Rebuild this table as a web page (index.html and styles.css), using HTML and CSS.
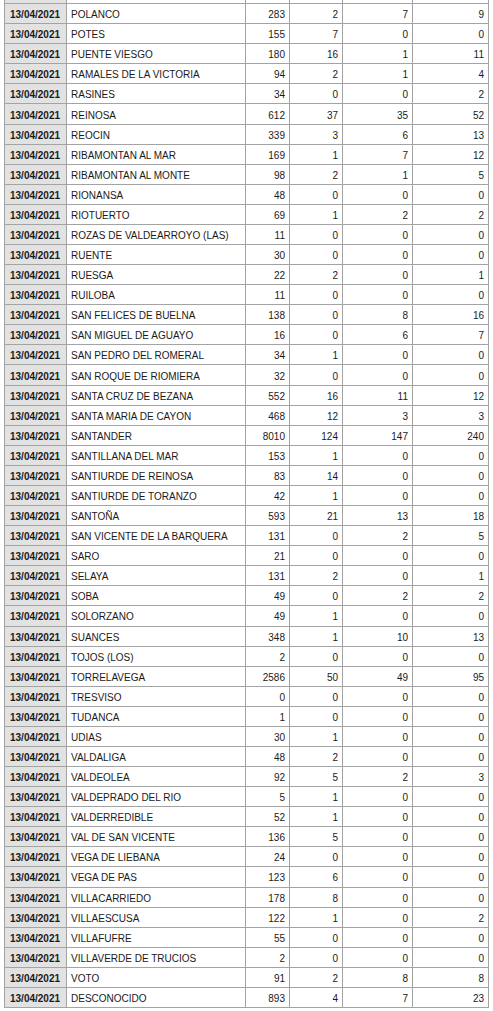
FILE: index.html
```html
<!DOCTYPE html>
<html>
<head>
<meta charset="utf-8">
<link rel="stylesheet" href="styles.css">
</head>
<body>
<div class="wrap">
<table class="data">
<colgroup>
<col class="c-date"><col class="c-name"><col class="c-n1"><col class="c-n2"><col class="c-n3"><col class="c-n4">
</colgroup>
<tbody>
<tr class="partial"><td class="d"></td><td class="m"></td><td></td><td></td><td></td><td></td></tr>
<tr><td class="d">13/04/2021</td><td class="m">POLANCO</td><td>283</td><td>2</td><td>7</td><td>9</td></tr>
<tr><td class="d">13/04/2021</td><td class="m">POTES</td><td>155</td><td>7</td><td>0</td><td>0</td></tr>
<tr><td class="d">13/04/2021</td><td class="m">PUENTE VIESGO</td><td>180</td><td>16</td><td>1</td><td>11</td></tr>
<tr><td class="d">13/04/2021</td><td class="m">RAMALES DE LA VICTORIA</td><td>94</td><td>2</td><td>1</td><td>4</td></tr>
<tr><td class="d">13/04/2021</td><td class="m">RASINES</td><td>34</td><td>0</td><td>0</td><td>2</td></tr>
<tr><td class="d">13/04/2021</td><td class="m">REINOSA</td><td>612</td><td>37</td><td>35</td><td>52</td></tr>
<tr><td class="d">13/04/2021</td><td class="m">REOCIN</td><td>339</td><td>3</td><td>6</td><td>13</td></tr>
<tr><td class="d">13/04/2021</td><td class="m">RIBAMONTAN AL MAR</td><td>169</td><td>1</td><td>7</td><td>12</td></tr>
<tr><td class="d">13/04/2021</td><td class="m">RIBAMONTAN AL MONTE</td><td>98</td><td>2</td><td>1</td><td>5</td></tr>
<tr><td class="d">13/04/2021</td><td class="m">RIONANSA</td><td>48</td><td>0</td><td>0</td><td>0</td></tr>
<tr><td class="d">13/04/2021</td><td class="m">RIOTUERTO</td><td>69</td><td>1</td><td>2</td><td>2</td></tr>
<tr><td class="d">13/04/2021</td><td class="m">ROZAS DE VALDEARROYO (LAS)</td><td>11</td><td>0</td><td>0</td><td>0</td></tr>
<tr><td class="d">13/04/2021</td><td class="m">RUENTE</td><td>30</td><td>0</td><td>0</td><td>0</td></tr>
<tr><td class="d">13/04/2021</td><td class="m">RUESGA</td><td>22</td><td>2</td><td>0</td><td>1</td></tr>
<tr><td class="d">13/04/2021</td><td class="m">RUILOBA</td><td>11</td><td>0</td><td>0</td><td>0</td></tr>
<tr><td class="d">13/04/2021</td><td class="m">SAN FELICES DE BUELNA</td><td>138</td><td>0</td><td>8</td><td>16</td></tr>
<tr><td class="d">13/04/2021</td><td class="m">SAN MIGUEL DE AGUAYO</td><td>16</td><td>0</td><td>6</td><td>7</td></tr>
<tr><td class="d">13/04/2021</td><td class="m">SAN PEDRO DEL ROMERAL</td><td>34</td><td>1</td><td>0</td><td>0</td></tr>
<tr><td class="d">13/04/2021</td><td class="m">SAN ROQUE DE RIOMIERA</td><td>32</td><td>0</td><td>0</td><td>0</td></tr>
<tr><td class="d">13/04/2021</td><td class="m">SANTA CRUZ DE BEZANA</td><td>552</td><td>16</td><td>11</td><td>12</td></tr>
<tr><td class="d">13/04/2021</td><td class="m">SANTA MARIA DE CAYON</td><td>468</td><td>12</td><td>3</td><td>3</td></tr>
<tr><td class="d">13/04/2021</td><td class="m">SANTANDER</td><td>8010</td><td>124</td><td>147</td><td>240</td></tr>
<tr><td class="d">13/04/2021</td><td class="m">SANTILLANA DEL MAR</td><td>153</td><td>1</td><td>0</td><td>0</td></tr>
<tr><td class="d">13/04/2021</td><td class="m">SANTIURDE DE REINOSA</td><td>83</td><td>14</td><td>0</td><td>0</td></tr>
<tr><td class="d">13/04/2021</td><td class="m">SANTIURDE DE TORANZO</td><td>42</td><td>1</td><td>0</td><td>0</td></tr>
<tr><td class="d">13/04/2021</td><td class="m">SANTOÑA</td><td>593</td><td>21</td><td>13</td><td>18</td></tr>
<tr><td class="d">13/04/2021</td><td class="m">SAN VICENTE DE LA BARQUERA</td><td>131</td><td>0</td><td>2</td><td>5</td></tr>
<tr><td class="d">13/04/2021</td><td class="m">SARO</td><td>21</td><td>0</td><td>0</td><td>0</td></tr>
<tr><td class="d">13/04/2021</td><td class="m">SELAYA</td><td>131</td><td>2</td><td>0</td><td>1</td></tr>
<tr><td class="d">13/04/2021</td><td class="m">SOBA</td><td>49</td><td>0</td><td>2</td><td>2</td></tr>
<tr><td class="d">13/04/2021</td><td class="m">SOLORZANO</td><td>49</td><td>1</td><td>0</td><td>0</td></tr>
<tr><td class="d">13/04/2021</td><td class="m">SUANCES</td><td>348</td><td>1</td><td>10</td><td>13</td></tr>
<tr><td class="d">13/04/2021</td><td class="m">TOJOS (LOS)</td><td>2</td><td>0</td><td>0</td><td>0</td></tr>
<tr><td class="d">13/04/2021</td><td class="m">TORRELAVEGA</td><td>2586</td><td>50</td><td>49</td><td>95</td></tr>
<tr><td class="d">13/04/2021</td><td class="m">TRESVISO</td><td>0</td><td>0</td><td>0</td><td>0</td></tr>
<tr><td class="d">13/04/2021</td><td class="m">TUDANCA</td><td>1</td><td>0</td><td>0</td><td>0</td></tr>
<tr><td class="d">13/04/2021</td><td class="m">UDIAS</td><td>30</td><td>1</td><td>0</td><td>0</td></tr>
<tr><td class="d">13/04/2021</td><td class="m">VALDALIGA</td><td>48</td><td>2</td><td>0</td><td>0</td></tr>
<tr><td class="d">13/04/2021</td><td class="m">VALDEOLEA</td><td>92</td><td>5</td><td>2</td><td>3</td></tr>
<tr><td class="d">13/04/2021</td><td class="m">VALDEPRADO DEL RIO</td><td>5</td><td>1</td><td>0</td><td>0</td></tr>
<tr><td class="d">13/04/2021</td><td class="m">VALDERREDIBLE</td><td>52</td><td>1</td><td>0</td><td>0</td></tr>
<tr><td class="d">13/04/2021</td><td class="m">VAL DE SAN VICENTE</td><td>136</td><td>5</td><td>0</td><td>0</td></tr>
<tr><td class="d">13/04/2021</td><td class="m">VEGA DE LIEBANA</td><td>24</td><td>0</td><td>0</td><td>0</td></tr>
<tr><td class="d">13/04/2021</td><td class="m">VEGA DE PAS</td><td>123</td><td>6</td><td>0</td><td>0</td></tr>
<tr><td class="d">13/04/2021</td><td class="m">VILLACARRIEDO</td><td>178</td><td>8</td><td>0</td><td>0</td></tr>
<tr><td class="d">13/04/2021</td><td class="m">VILLAESCUSA</td><td>122</td><td>1</td><td>0</td><td>2</td></tr>
<tr><td class="d">13/04/2021</td><td class="m">VILLAFUFRE</td><td>55</td><td>0</td><td>0</td><td>0</td></tr>
<tr><td class="d">13/04/2021</td><td class="m">VILLAVERDE DE TRUCIOS</td><td>2</td><td>0</td><td>0</td><td>0</td></tr>
<tr><td class="d">13/04/2021</td><td class="m">VOTO</td><td>91</td><td>2</td><td>8</td><td>8</td></tr>
<tr><td class="d">13/04/2021</td><td class="m">DESCONOCIDO</td><td>893</td><td>4</td><td>7</td><td>23</td></tr>
</tbody>
</table>
</div>
</body>
</html>
```
FILE: styles.css
```css
html, body {
  margin: 0;
  padding: 0;
  background: #ffffff;
}
.wrap {
  margin-top: -17px;
  padding-left: 4px;
}
.data {
  border-collapse: collapse;
  table-layout: fixed;
  width: 484px;
  font-family: "Liberation Sans", Arial, Helvetica, sans-serif;
  font-size: 10px;
  color: #1a1a1a;
}
.c-date { width: 62px; }
.c-name { width: 179px; }
.c-n1 { width: 44px; }
.c-n2 { width: 53px; }
.c-n3 { width: 70px; }
.c-n4 { width: 76px; }
.data td {
  border: 1px solid #a3a3a3;
  height: 16.08px;
  padding: 3px 4px 0 4px;
  text-align: right;
  white-space: nowrap;
  overflow: hidden;
  line-height: 12px;
}
.data td.d {
  background: #e2e2e2;
  font-weight: bold;
  text-align: left;
  padding-left: 5px;
}
.data td.m {
  text-align: left;
  padding-left: 4px;
}
```
